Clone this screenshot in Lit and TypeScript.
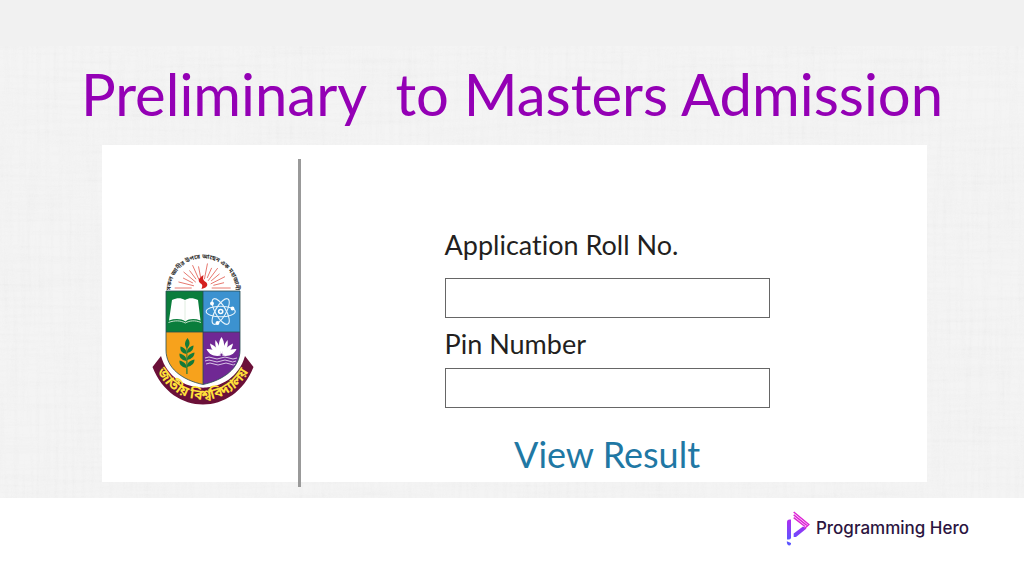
import { LitElement, html, css, svg } from "lit";
import { customElement } from "lit/decorators.js";

@customElement("university-emblem")
class UniversityEmblem extends LitElement {
  static styles = css`
    :host {
      display: block;
    }
    .emblem {
      display: block;
      width: 100%;
      height: auto;
    }
    .motto {
      font: 700 6px "Noto Sans Bengali", "Noto Sans", sans-serif;
      fill: #333;
    }
    .name {
      font: 700 14px "Noto Sans Bengali", "Noto Sans", sans-serif;
      fill: #ffe23a;
    }
  `;

  private rays() {
    const angles = [0, 14, 27, 40, 53, 66, 79, 101, 114, 127, 140, 153, 166, 180];
    return angles.map((a, i) => {
      const t = (a * Math.PI) / 180;
      const inner = i % 2 ? 11 : 9;
      const outer = a === 0 || a === 180 ? 28 : i % 2 ? 22 : 25;
      return svg`<line
        x1=${54.7 + Math.cos(t) * inner} y1=${36 - Math.sin(t) * inner}
        x2=${54.7 + Math.cos(t) * outer} y2=${36 - Math.sin(t) * outer}></line>`;
    });
  }

  render() {
    return html`
      <svg class="emblem" viewBox="0 0 110 156" role="img" aria-label="জাতীয় বিশ্ববিদ্যালয়">
        <defs>
          <path id="motto-arc" d="M22.500 39 A32.500 32.500 0 0 1 87.500 39"></path>
          <path id="name-arc" d="M8 116 C26 158 84 158 102 116"></path>
          <clipPath id="shield">
            <path d="M18 39H92V98C92 116 76 128 55 132.500C34 128 18 116 18 98Z"></path>
          </clipPath>
        </defs>

        <text class="motto"><textPath href="#motto-arc" startOffset="50%" text-anchor="middle">সকল জ্ঞানীর উপরে আছেন এক মহাজ্ঞানী</textPath></text>

        <g stroke="#e0554a" stroke-width="0.8">${this.rays()}</g>
        <path d="M55.500 23C49 27 50 30 53.500 32C55 33.500 54 35 53.500 37C60.500 35.500 60.500 31.500 57 29.500C54.500 27.500 55 26 55.500 23Z" fill="#d5201f"></path>

        <path d="M13 104C25 146 85 146 97 104L105.500 115C86 165 24 165 4.500 115Z" fill="#6b1038"></path>
        <path d="M16 38H94V99C94 119 77 131 55 135.500C33 131 16 119 16 99Z" fill="#fff"></path>
        <g clip-path="url(#shield)">
          <rect x="18" y="39" width="37" height="41.500" fill="#0a7d3c"></rect>
          <rect x="55" y="39" width="37" height="41.500" fill="#3c92d0"></rect>
          <rect x="18" y="80" width="37" height="54" fill="#f7a21c"></rect>
          <rect x="55" y="80" width="37" height="54" fill="#702894"></rect>
        </g>
        <path d="M18 39H92V98C92 116 76 128 55 132.500C34 128 18 116 18 98ZM55 39V132M18 80H92" fill="none" stroke="#274d52" stroke-width="0.8"></path>

        <path d="M24 48C29 45.500 33 45.500 37 48C41 45.500 45 45.500 50 48L52.500 68.500C47 66.500 41 66.500 37.500 69.500C33 66.500 27 66.500 21 68.500Z" fill="#fff"></path>
        <path d="M37 48.500V69M20.500 70.500C27 68 33 68.500 37.300 71C42 68.500 47 68 53 70.500" fill="none" stroke="#dcebdd" stroke-width="0.900"></path>

        <g fill="none" stroke="#e6f3fb" stroke-width="1.100">
          <ellipse cx="72.700" cy="59.500" rx="14.500" ry="5.300"></ellipse>
          <ellipse cx="72.700" cy="59.500" rx="14.500" ry="5.300" transform="rotate(60 72.700 59.500)"></ellipse>
          <ellipse cx="72.700" cy="59.500" rx="14.500" ry="5.300" transform="rotate(120 72.700 59.500)"></ellipse>
        </g>
        <g fill="#fff">
          <circle cx="72.700" cy="59.500" r="2.800"></circle>
          <circle cx="64" cy="51.500" r="1.900"></circle>
          <circle cx="84.500" cy="56.500" r="1.900"></circle>
          <circle cx="69.500" cy="71" r="1.900"></circle>
        </g>
        <circle cx="72.700" cy="59.500" r="1.200" fill="#3c92d0"></circle>

        <g fill="#137a39">
          <path d="M39.500 86C42.500 90 42 93 39 96.500C36 93 36.500 90 39.500 86Z"></path>
          <path d="M38.500 102C33 101 32 98 32.500 94.500C37 96 38.500 98 38.500 102Z"></path>
          <path d="M39 101C44 100 45.500 97 45.500 93.500C41 95 39 97 39 101Z"></path>
          <path d="M38.500 109C33 108 31 105 31.500 101.500C36.500 103 38.500 105 38.500 109Z"></path>
          <path d="M39 108C44 107 46.500 104 46.500 100.500C41 102 39 104 39 108Z"></path>
          <path d="M38.500 116C33 115 31 112 31.500 108.500C36.500 110 38.500 112 38.500 116Z"></path>
          <path d="M39 115C44 114 46.500 111 46.500 107.500C41 109 39 111 39 115Z"></path>
          <path d="M38.500 93H39.300L39.500 122H38.300Z"></path>
        </g>

        <g fill="#fff">
          <path d="M73.500 85C77 90 77 97 73.500 102C70 97 70 90 73.500 85Z"></path>
          <path d="M67.500 88C71 92 72.500 97 73 102C68.500 99 66.500 94 67.500 88Z"></path>
          <path d="M79.500 88C76 92 74.500 97 74 102C78.500 99 80.500 94 79.500 88Z"></path>
          <path d="M62 91.500C67 94 71 97 73 102.500C67 102 63 98 62 91.500Z"></path>
          <path d="M85 91.500C80 94 76 97 74 102.500C80 102 84 98 85 91.500Z"></path>
          <path d="M58.500 97C64 96.500 69 99 73 103.500C67 105 61 103 58.500 97Z"></path>
          <path d="M88.500 97C83 96.500 78 99 74 103.500C80 105 86 103 88.500 97Z"></path>
        </g>
        <path d="M57 106q4-2 8 0t8 0t8 0t8 0M57 109q4-2 8 0t8 0t8 0t7 0M58 112q4-2 8 0t8 0t8 0t5 0" fill="none" stroke="#d9c5e6" stroke-width="1"></path>

        <text class="name"><textPath href="#name-arc" startOffset="50%" text-anchor="middle">জাতীয় বিশ্ববিদ্যালয়</textPath></text>
      </svg>
    `;
  }
}

@customElement("brand-mark")
class BrandMark extends LitElement {
  static styles = css`
    :host {
      display: flex;
      align-items: center;
      gap: 6px;
    }
    .icon {
      width: 24px;
      height: 36px;
      flex: none;
    }
    .label {
      font: 500 17px/24px Inter, "Liberation Sans", sans-serif;
      color: #2b1440;
      white-space: nowrap;
    }
  `;

  render() {
    return html`
      <svg class="icon" viewBox="0 0 24 36" aria-hidden="true">
        <defs>
          <linearGradient id="bar" x1="0" y1="0" x2="0" y2="1">
            <stop offset="0" stop-color="#b02df0"></stop>
            <stop offset="1" stop-color="#5c55ff"></stop>
          </linearGradient>
          <linearGradient id="tail" x1="1" y1="0" x2="0" y2="1">
            <stop offset="0" stop-color="#a32df0"></stop>
            <stop offset="1" stop-color="#6a4cff"></stop>
          </linearGradient>
        </defs>
        <path d="M1 12Q1 9.500 3.500 9.500H5V27.500Q5 29.500 3 29.500H1Z" fill="url(#bar)"></path>
        <path d="M0.800 31.300L5 33V34Q4.500 35.500 3 35.500Q0.800 35 0.800 31.300Z" fill="#5c55ff"></path>
        <path d="M7.700 23.500L17 16.500L20.500 18.500L10 27H7.700Z" fill="url(#tail)"></path>
        <g fill="none" stroke="#dd22d5" stroke-width="1.500">
          <path d="M7.700 2L22.800 14.500L18.500 18.500"></path>
          <path d="M7.700 4.800L20.800 15.300"></path>
          <path d="M7.700 7.600L19 16.500"></path>
        </g>
      </svg>
      <span class="label">Programming Hero</span>
    `;
  }
}

@customElement("app-root")
class AppRoot extends LitElement {
  static styles = css`
    :host {
      display: flex;
      flex-direction: column;
      min-height: 100vh;
      background: #fff;
      font-family: Lato, "Noto Sans", sans-serif;
      font-variant-ligatures: none;
      color: #231f20;
    }
    .strip {
      height: 46px;
      background: #f1f1f1;
    }
    .backdrop {
      padding-bottom: 16px;
      background: #f4f4f4
        url("data:image/svg+xml,%3Csvg xmlns='http://www.w3.org/2000/svg' width='512' height='452'%3E%3Cfilter id='h' x='0' y='0' width='100%25' height='100%25'%3E%3CfeTurbulence type='fractalNoise' baseFrequency='.012 .22' numOctaves='3' seed='4' stitchTiles='stitch'/%3E%3CfeColorMatrix values='0 0 0 0 .6 0 0 0 0 .6 0 0 0 0 .6 .5 0 0 0 -.2'/%3E%3C/filter%3E%3Cfilter id='v' x='0' y='0' width='100%25' height='100%25'%3E%3CfeTurbulence type='fractalNoise' baseFrequency='.22 .012' numOctaves='3' seed='9' stitchTiles='stitch'/%3E%3CfeColorMatrix values='0 0 0 0 .6 0 0 0 0 .6 0 0 0 0 .6 .5 0 0 0 -.2'/%3E%3C/filter%3E%3Crect width='512' height='452' filter='url(%23h)' opacity='.35'/%3E%3Crect width='512' height='452' filter='url(%23v)' opacity='.35'/%3E%3C/svg%3E");
    }
    .title {
      margin: 0;
      padding: 8px 0 11px;
      font-size: 58px;
      line-height: 80px;
      font-weight: 400;
      color: #9400b5;
      text-align: center;
      white-space: pre;
    }
    .card {
      display: flex;
      margin: 0 9.5% 0 10%;
      background: #fff;
    }
    .crest {
      flex: 0 0 196px;
      display: flex;
      justify-content: center;
      padding: 107px 0 74px 6px;
      box-sizing: border-box;
    }
    .crest university-emblem {
      width: 110px;
    }
    .rule {
      flex: none;
      width: 3px;
      margin: 14px 0 -5px;
      background: #999;
    }
    .form {
      flex: 1;
      display: flex;
      flex-direction: column;
      align-items: center;
      padding: 80px 14px 0 0;
    }
    .field {
      display: flex;
      flex-direction: column;
      width: 325px;
      max-width: 100%;
    }
    .caption {
      font-size: 27px;
      line-height: 40px;
    }
    .box {
      height: 40px;
      box-sizing: border-box;
      border: 1px solid #666;
      border-radius: 0;
      background: #fff;
      padding: 0 10px;
      font: inherit;
      font-size: 20px;
    }
    .roll {
      gap: 13px;
      margin-bottom: 6px;
    }
    .pin {
      gap: 4px;
    }
    .submit {
      margin-top: 22px;
      border: 0;
      padding: 0;
      background: none;
      font: inherit;
      font-size: 36px;
      line-height: 48px;
      color: #1f78a4;
      cursor: pointer;
    }
    .footer {
      display: flex;
      justify-content: flex-end;
      padding: 12px 55px 12px 0;
    }
  `;

  render() {
    return html`
      <div class="strip"></div>
      <main class="backdrop">
        <h1 class="title">Preliminary  to Masters Admission</h1>
        <section class="card">
          <div class="crest"><university-emblem></university-emblem></div>
          <div class="rule"></div>
          <form class="form" @submit=${(e: Event) => e.preventDefault()}>
            <div class="field roll">
              <label class="caption" for="roll">Application Roll No.</label>
              <input class="box" id="roll" type="text" />
            </div>
            <div class="field pin">
              <label class="caption" for="pin">Pin Number</label>
              <input class="box" id="pin" type="text" />
            </div>
            <button class="submit" type="submit">View Result</button>
          </form>
        </section>
      </main>
      <footer class="footer"><brand-mark></brand-mark></footer>
    `;
  }
}
